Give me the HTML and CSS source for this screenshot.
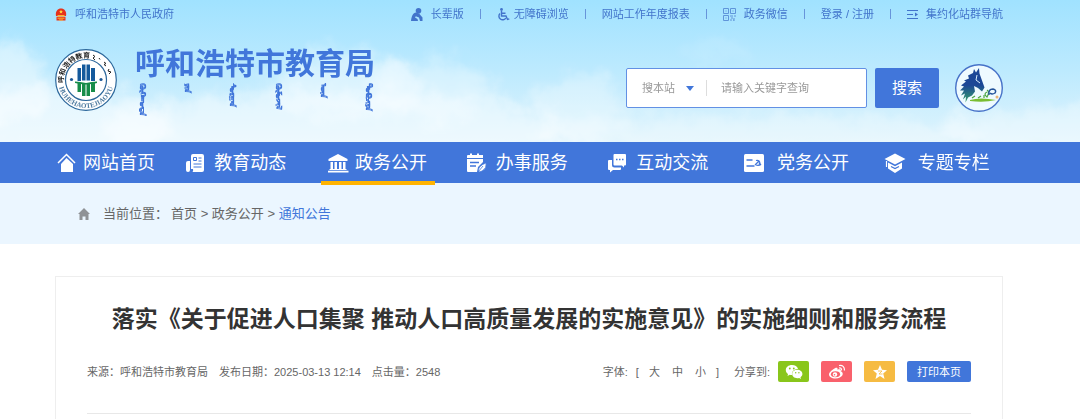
FILE: index.html
```html
<!DOCTYPE html>
<html lang="zh-CN">
<head>
<meta charset="utf-8">
<meta name="viewport" content="width=device-width, initial-scale=1">
<title>呼和浩特市教育局</title>
<link rel="stylesheet" href="styles.css">
</head>
<body>
<header class="header">
  <svg class="sky" viewBox="0 0 1080 142" preserveAspectRatio="none" aria-hidden="true">
    <defs>
      <filter id="cloud" x="-20%" y="-40%" width="140%" height="180%">
        <feGaussianBlur stdDeviation="7" result="b"/>
        <feTurbulence type="fractalNoise" baseFrequency="0.035" numOctaves="4" seed="8" result="n"/>
        <feDisplacementMap in="b" in2="n" scale="34" xChannelSelector="R" yChannelSelector="G"/>
      </filter>
    </defs>
    <g fill="#fff" filter="url(#cloud)">
      <ellipse cx="5" cy="85" rx="42" ry="40" opacity=".45"/>
      <ellipse cx="60" cy="125" rx="110" ry="38" opacity=".5"/>
      <ellipse cx="345" cy="85" rx="75" ry="32" opacity=".4"/>
      <ellipse cx="430" cy="90" rx="60" ry="30" opacity=".35"/>
      <ellipse cx="330" cy="130" rx="230" ry="38" opacity=".45"/>
      <ellipse cx="580" cy="110" rx="45" ry="38" opacity=".3"/>
      <ellipse cx="760" cy="135" rx="230" ry="20" opacity=".3"/>
      <ellipse cx="1040" cy="130" rx="90" ry="24" opacity=".35"/>
      <ellipse cx="720" cy="50" rx="40" ry="10" opacity=".12"/>
    </g>
  </svg>

  <div class="topbar">
    <a class="toplink" href="#">
      <svg class="emblem" viewBox="0 0 12 13" aria-hidden="true"><path d="M1 8C0 3 3 .5 6 .5S12 3 11 8z" fill="#e5311d"/><path d="M6 1.8l.6 1.3 1.3.1-1 .9.3 1.3L6 4.7l-1.200.7.3-1.300-1-.9 1.300-.1z" fill="#ffd83c"/><path d="M2.500 7h7v1.500h-7z" fill="#ffb52e"/><path d="M1.500 8.800h9V12.500H1.500z" fill="#e5311d"/><path d="M2.500 10.200h7M4 12h4" stroke="#ffb52e"/></svg>
      呼和浩特市人民政府
    </a>
    <nav class="toplinks" aria-label="快捷入口">
      <a class="toplink" href="#">
        <svg class="topicon" viewBox="0 0 13 13" aria-hidden="true"><circle cx="8.500" cy="2.800" r="2.800" fill="currentColor"/><path d="M6 4.500C3 5 1.500 8 1 13h7l-.5-2L5 9.500l.8-1.200L9 9.500 10 13h2.500V9.500L9 5.500z" fill="currentColor"/></svg>
        长辈版</a>
      <span class="sep"></span>
      <a class="toplink toplink-tight" href="#">
        <svg class="topicon" viewBox="0 0 13 13" fill="none" stroke="currentColor" stroke-width="1.400" aria-hidden="true"><circle cx="4.500" cy="1.500" r="1.400" fill="currentColor" stroke="none"/><path d="M4.500 3v5h4.500l1.500 3.500 1.800-.6M4.500 5.300h4"/><path d="M3 5.500A3.700 3.700 0 1 0 8.800 10"/></svg>
        无障碍浏览</a>
      <span class="sep"></span>
      <a class="toplink" href="#">网站工作年度报表</a>
      <span class="sep"></span>
      <a class="toplink" href="#">
        <svg class="topicon qr" viewBox="0 0 13 13" fill="none" stroke="currentColor" aria-hidden="true"><path d="M.5.5h5v5h-5zM7.500.5h5v5h-5zM.5 7.500h5v5h-5z"/><path d="M2.500 3h1M9.500 3h1M2.500 10h1M7 8h3M11 8h2M8 10h2M11 10v3M7 12h2M10 12h1"/></svg>
        政务微信</a>
      <span class="sep"></span>
      <a class="toplink" href="#">登录 / 注册</a>
      <span class="sep"></span>
      <a class="toplink" href="#">
        <svg class="menuicon" viewBox="0 0 11 11" fill="none" stroke="currentColor" aria-hidden="true"><path d="M0 1.500h11M0 5.500h6M0 9.500h11"/><path d="M8 3.500v4L11 5.500z" fill="currentColor" stroke="none"/></svg>
        集约化站群导航</a>
    </nav>
  </div>

  <div class="masthead">
    <a class="brand" href="#">
      <svg class="seal" viewBox="0 0 62 62" aria-hidden="true">
        <defs>
          <path id="arc-top" d="M9.500 37A22.300 22.300 0 1 1 52.500 37"/>
          <path id="arc-bottom" d="M3 31A28 28 0 0 0 59 31"/>
        </defs>
        <circle cx="31" cy="31" r="30.300" fill="#fff" stroke="#2c679b" stroke-width="1.200"/>
        <circle cx="31" cy="31" r="20.500" fill="none" stroke="#2c679b" stroke-width="1.200"/>
        <text class="seal-cn"><textPath href="#arc-top" startOffset="3">呼和浩特教育</textPath></text>
        <text class="seal-en"><textPath href="#arc-bottom" startOffset="50%" text-anchor="middle">HUHEHAOTEJIAOYU</textPath></text>
        <path d="M38 6l2 1.500-2 1.500 2 2M44 9l1 1.500M49 13l2 1.500-2 1 2 1.500M54 20l-1 2 3 1-2 2" fill="none" stroke="#222"/>
        <circle cx="16.500" cy="30.500" r="1.600" fill="#1c5795"/><circle cx="46" cy="30.500" r="1.600" fill="#1c5795"/>
        <path d="M22.500 19h3.500v13h-3.500zM27 15.500h3.500v16H27zM31.500 15.500H35v16h-3.500zM36 19h4v13h-4z" fill="#155a9c"/>
        <path d="M20 32.500q5 0 11 1.500 6-1.500 11-1.500v1.500l-2 .5V43h-4v-8l-1 .2V47h-3.500V35.500h-1V47H27V35.200l-1-.2v8h-3.500v-8.500l-2.500-.5z" fill="#178c49"/>
      </svg>
      <span class="brand-text">
        <span class="brand-name">呼和浩特市教育局</span>
        <span class="brand-mn" lang="mn-Mong"><span>ᠬᠥᠬᠡᠬᠣᠲᠠ</span><span>ᠶᠢᠨ</span><span>ᠰᠤᠷᠭᠠᠨ</span><span>ᠬᠥᠮᠦᠵᠢᠯ</span><span>ᠦᠨ</span><span>ᠲᠣᠪᠴᠢᠶᠠ</span></span>
      </span>
    </a>
    <form class="search" role="search">
      <div class="searchbox">
        <select class="scope" aria-label="搜索范围"><option>搜本站</option></select>
        <svg class="caret" viewBox="0 0 8 5" aria-hidden="true"><path d="M0 0h8L4 5z" fill="#4176da"/></svg>
        <input class="query" type="text" placeholder="请输入关键字查询" aria-label="关键字">
      </div>
      <button class="submit" type="button">搜索</button>
      <a class="mascot" href="#" aria-label="青城马">
        <svg viewBox="0 0 48 48" aria-hidden="true">
          <defs><linearGradient id="mane" x1="0" y1="0" x2="0" y2="1"><stop offset=".5" stop-color="#1c4796"/><stop offset="1" stop-color="#34a069"/></linearGradient></defs>
          <circle cx="24" cy="24" r="23.300" fill="#eefaff" stroke="#4772c8" stroke-width="1.400"/>
          <path d="M18 9l1-4 2 3.500L24 4l.5 5.500 2.500 7 2.500 7-2.500 4-4-3.500-4-2 1 5.500-3 4-4 2-2.500 5 .5-6-3 3 2-6-4 2 3-5-4 0 4-4-3-1 5-4-2-1 5-2-1-3z" fill="url(#mane)"/>
          <path d="M22 11l-1 5 4 3" fill="none" stroke="#d9efff"/>
          <path d="M15 36q10-3 26 0-12 3-26 1" fill="#79bd32"/>
          <path d="M17 34l3-2m3 2 3-2m3-1v3m3-6q-4 2 0 5 3-5 0-7" fill="none" stroke="#4ba642" stroke-width="1.200"/>
          <path d="M34 31q-1-6 4-6 4 1 2 4-3 2-5 0" fill="none" stroke="#24549b" stroke-width="1.500"/>
          <circle cx="42" cy="33" r="1.500" fill="#e8b376"/>
        </svg>
      </a>
    </form>
  </div>
</header>

<nav class="mainnav" aria-label="主导航">
  <a class="navlink" href="#"><svg class="navicon" viewBox="0 0 34 22" aria-hidden="true"><path d="M9 11l8.500-8.500L26 11" fill="none" stroke="#fff" stroke-width="1.500"/><path d="M17.500 6l6.500 6v8h-12v-8z" fill="#fff"/></svg>网站首页</a>
  <a class="navlink" href="#"><svg class="navicon" viewBox="0 0 34 22" aria-hidden="true"><path d="M11 4q0-2 2-2h9q2 0 2 2v14q0 2-2 2h-9.500q1-1 .5-3h-2z" fill="#fff"/><path d="M6 11q0-2 2-2h2v9q0 2-2 2t-2-2z" fill="#fff"/><path d="M13.500 5.500h3v3h-3zM18.500 6h3M18.500 9h3M13.500 12h8M13.500 15h8" fill="none" stroke="#4176da"/></svg>教育动态</a>
  <a class="navlink active" href="#" aria-current="page"><svg class="navicon" viewBox="0 0 34 22" aria-hidden="true"><path d="M17 2l9.500 5v2h-19V7zM9.500 10H12v7H9.500zM13.500 10H16v7h-2.500zM18 10h2.500v7H18zM22 10h2.500v7H22zM8.500 17h17v1h-17zM7 18.800h20.500V20.500H7z" fill="#fff"/></svg>政务公开</a>
  <a class="navlink" href="#"><svg class="navicon" viewBox="0 0 34 22" aria-hidden="true"><path d="M6 3h2V1.500h2V3h5V1.500h2V3h4v3H5V4q0-1 1-1zM5 7h16v3l-5 5-1 5H6q-1 0-1-1z" fill="#fff"/><path d="M8 10.500h9M8 14h6" stroke="#4176da" stroke-width="1.300"/><path d="M16.500 20q-1-6 7.500-9 1 5-4 8z" fill="#fff" stroke="#4176da" stroke-width=".6"/><path d="M16 20l5-6" stroke="#4176da" stroke-width=".8"/></svg>办事服务</a>
  <a class="navlink" href="#"><svg class="navicon" viewBox="0 0 34 22" aria-hidden="true"><path d="M6 9q0-1 1-1h3v5q0 2.500 2.500 2.500H19V17q0 1-1 1h-7l-3 2.500V18H7q-1 0-1-1z" fill="#fff"/><path d="M11.500 3q0-1 1-1H23q1 0 1 1v9.500q0 1-1 1h-1v2l-2-2h-7.500q-1 0-1-1z" fill="#fff"/><path d="M14 7.500h1.500M17 7.500h1.500M20 7.500h1.500" stroke="#4176da" stroke-width="1.500"/></svg>互动交流</a>
  <a class="navlink" href="#"><svg class="navicon" viewBox="0 0 34 22" aria-hidden="true"><rect x="1" y="2" width="20" height="18" rx="1.500" fill="#fff"/><path d="M3.500 8h6M3.500 14h8" stroke="#4176da" stroke-width="1.500"/><path d="M13 8.500q4-1 4 4M12 13l4-4M13 13q3 1 5-1M16 11l2 2" fill="none" stroke="#4176da" stroke-width="1.200"/></svg>党务公开</a>
  <a class="navlink" href="#"><svg class="navicon" viewBox="0 0 34 22" aria-hidden="true"><path d="M11 1.500l10.500 5.500L11 12.500.5 7zM4 10.500l7 3.700 7-3.700v6l-7 4.500-7-4.500z" fill="#fff"/><path d="M7 14.500l4 2 4-2" fill="none" stroke="#4176da" stroke-width="1.200"/><path d="M2.500 9v6" stroke="#fff" stroke-width="1.200"/></svg>专题专栏</a>
</nav>

<nav class="crumbs" aria-label="当前位置">
  <svg class="crumb-home" viewBox="0 0 12 12" aria-hidden="true"><path d="M6 0l6 6h-1.500v6H7.500V8.500h-3V12h-3V6H0z" fill="#8f9296"/></svg>
  <span class="crumb-label">当前位置：</span>
  <span class="trail"><a href="#">首页</a> &gt; <a href="#">政务公开</a> &gt; <a class="current" href="#">通知公告</a></span>
</nav>

<main class="article">
  <h1 class="title">落实《关于促进人口集聚 推动人口高质量发展的实施意见》的实施细则和服务流程</h1>
  <div class="meta">
    <div class="facts">
      <span>来源：呼和浩特市教育局</span>
      <span>发布日期：2025-03-13 12:14</span>
      <span>点击量：2548</span>
    </div>
    <div class="tools">
      <div class="sizes"><span>字体:</span><span>[</span><button class="size" type="button">大</button><button class="size" type="button">中</button><button class="size" type="button">小</button><span>]</span></div>
      <span class="share-label">分享到:</span>
      <div class="shares">
        <a class="share wechat" href="#" aria-label="微信"><svg viewBox="0 0 18 16" aria-hidden="true"><path d="M7 1C3.300 1 .8 3.300.8 6c0 1.600.8 3 2.200 3.900L2.500 12l2.200-1.200q1.100.3 2.300.3C6.500 7.500 9 5 13 5 12.500 2.500 10 1 7 1z" fill="#fff"/><path d="M12.200 5.800c-2.900 0-5 1.900-5 4.200s2.100 4.200 5 4.200q1 0 1.900-.3l1.900 1-.5-1.700c1.200-.8 1.900-1.900 1.900-3.200 0-2.300-2.200-4.200-5.200-4.200z" fill="#fff"/><g fill="#89c61b"><circle cx="4.800" cy="4.500" r=".9"/><circle cx="8.800" cy="4.500" r=".9"/><circle cx="10.700" cy="8.800" r=".7"/><circle cx="13.900" cy="8.800" r=".7"/></g></svg></a>
        <a class="share weibo" href="#" aria-label="微博"><svg viewBox="0 0 18 16" aria-hidden="true"><path d="M7 4.200c1.500-.8 3-.4 2.500 1.500 2-.8 4-.4 3.300 1.600 4 1.500 1.700 7.200-5.300 7.200C3.500 14.500 1 12.800 1 10.500 1 8.500 4.500 5.200 7 4.200z" fill="#fff"/><ellipse cx="7.500" cy="10.300" rx="4.600" ry="3" fill="#f9616c"/><circle cx="7" cy="10.500" r="2.200" fill="#fff"/><circle cx="6.500" cy="10.800" r=".8" fill="#f9616c"/><path d="M11 4q2.800-.5 2.500 2.500M11 1.500q5.500-.8 5.500 5" fill="none" stroke="#fff" stroke-width="1.200"/></svg></a>
        <a class="share qzone" href="#" aria-label="QQ空间"><svg viewBox="0 0 18 16" aria-hidden="true"><path d="M9 1l2 4.800 5 .4-3.800 3.300L13.500 15 9 12l-4.500 3 1.300-5.500L2 6.200l5-.4z" fill="#fff"/><path d="M7 7h4L8 10h3.500" fill="none" stroke="#f6bb42" stroke-width=".8"/></svg></a>
        <button class="print" type="button">打印本页</button>
      </div>
    </div>
  </div>
</main>
</body>
</html>
```
FILE: styles.css
```css
* { box-sizing: border-box; }

body {
  margin: 0;
  background: #fff;
  color: #666;
  font: 11px/16px "Liberation Sans", "Noto Sans CJK SC", sans-serif;
}

a { color: inherit; text-decoration: none; }
button, input, select { font: inherit; color: inherit; }

.header {
  position: relative;
  padding: 6px 77px 30px 55px;
  background: linear-gradient(#a0e2ff, #bdeafe 50%, #dff4fd);
}

.sky {
  position: absolute;
  inset: 0;
  width: 100%;
  height: 100%;
}

.topbar {
  position: relative;
  display: flex;
  justify-content: space-between;
  color: #4274cb;
}

.toplinks { display: flex; align-items: center; gap: 16px; }
.toplink { display: flex; align-items: center; gap: 8px; white-space: nowrap; }
.toplink-tight { gap: 4px; }
.emblem { width: 12px; height: 13px; }
.topicon { width: 13px; height: 13px; }
.qr { opacity: .7; }
.menuicon { width: 11px; height: 11px; }
.sep { width: 1px; height: 10px; background: #6794da; }

.masthead {
  position: relative;
  display: flex;
  justify-content: space-between;
  align-items: center;
  margin-top: 26px;
}

.brand { display: flex; gap: 18px; color: #4176da; }
.seal { width: 62px; height: 62px; }
.seal-cn { font: 700 7px "Noto Sans CJK SC", sans-serif; fill: #222; }
.seal-en { font: 700 7px "Liberation Serif", serif; fill: #4f7ba0; }
.brand-text { display: flex; flex-direction: column; gap: 10px; }
.brand-name { font-size: 30px; line-height: 24px; font-weight: 700; font-family: "Noto Sans CJK SC", sans-serif; }
.brand-mn {
  display: flex;
  justify-content: space-between;
  height: 28px;
  font-size: 8px;
  line-height: 14px;
  font-weight: 700;
  text-shadow: 1px 0 currentColor;
}
.brand-mn span { writing-mode: vertical-lr; }

.search { display: flex; align-items: center; margin-top: 16px; }
.searchbox {
  display: flex;
  align-items: center;
  width: 241px;
  height: 40px;
  padding: 0 15px;
  background: #fff;
  border: 1px solid #6290e4;
  border-radius: 2px;
  color: #999;
}
.scope { appearance: none; width: 44px; padding: 0; border: 0; background: none; }
.caret { width: 8px; height: 5px; pointer-events: none; }
.query {
  flex: 1;
  min-width: 0;
  margin-left: 12px;
  padding: 0 0 0 14px;
  border: 0;
  border-left: 1px solid #ddd;
  background: none;
}
.query::placeholder { color: #999; opacity: 1; }
.submit {
  width: 64px;
  height: 40px;
  margin-left: 8px;
  padding: 0;
  border: 0;
  border-radius: 2px;
  background: #4176da;
  color: #fff;
  font-size: 15px;
}
.mascot { margin-left: 16px; }
.mascot svg { display: block; width: 48px; height: 48px; }

.mainnav {
  position: relative;
  display: grid;
  grid-template-columns: 122px repeat(6, 1fr);
  justify-items: center;
  padding: 0 73px 0 41px;
  background: #4176da;
}
.navlink {
  position: relative;
  display: flex;
  align-items: center;
  height: 41px;
  color: #fff;
  font-size: 18px;
  white-space: nowrap;
}
.navicon { width: 34px; height: 22px; }
.active::after {
  content: "";
  position: absolute;
  left: 0;
  right: -8px;
  bottom: -2px;
  height: 4px;
  background: #ffb300;
}

.crumbs {
  display: flex;
  align-items: center;
  height: 61px;
  padding: 0 78px;
  background: #ebf6ff;
  font-size: 13px;
}
.crumb-home { width: 12px; height: 12px; }
.crumb-label { margin: 0 3px 0 13px; }
.current { color: #4176da; }

.article {
  margin: 32px 77px 0 55px;
  padding: 0 31px;
  border: 1px solid #eee;
  min-height: 160px;
}
.title {
  margin: 26px 0 0;
  color: #333;
  text-align: center;
  font-size: 23px;
  line-height: 32px;
  font-weight: 700;
}
.meta {
  display: flex;
  justify-content: space-between;
  align-items: center;
  margin-top: 26px;
  padding-bottom: 31px;
  border-bottom: 1px solid #e8e8e8;
}
.facts { display: flex; gap: 11px; }
.tools { display: flex; align-items: center; }
.sizes { display: flex; gap: 8px; }
.size { padding: 0 2px; border: 0; background: none; }
.share-label { margin: 0 8px 0 15px; }
.shares { display: flex; gap: 12px; }
.share {
  display: flex;
  align-items: center;
  justify-content: center;
  width: 31px;
  height: 21px;
  border-radius: 2px;
}
.share svg { width: 18px; height: 16px; }
.wechat { background: #89c61b; }
.weibo { background: #f9616c; }
.qzone { background: #f6bb42; }
.print {
  width: 64px;
  padding: 0;
  border: 0;
  border-radius: 2px;
  background: #4176da;
  color: #fff;
}
```
